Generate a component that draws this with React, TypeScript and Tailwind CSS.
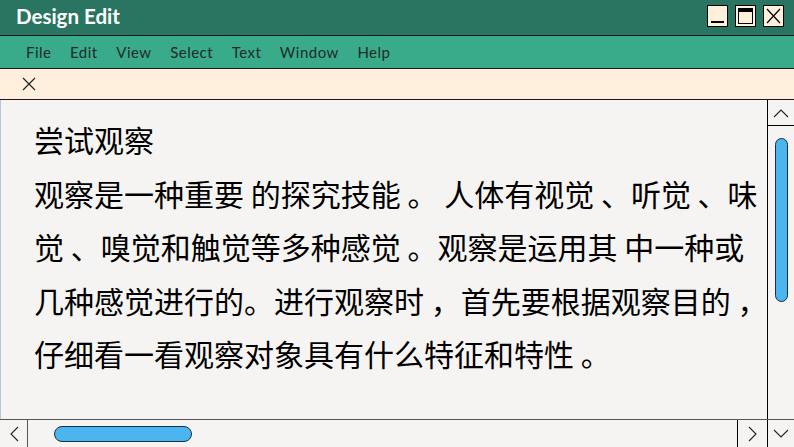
import React from "react";

const lines = [
  "尝试观察",
  "观察是一种重要 的探究技能 。 人体有视觉 、听觉 、味",
  "觉 、嗅觉和触觉等多种感觉 。观察是运用其 中一种或",
  "几种感觉进行的。进行观察时 ，首先要根据观察目的 ，",
  "仔细看一看观察对象具有什么特征和特性 。",
];

const menus = ["File", "Edit", "View", "Select", "Text", "Window", "Help"];

const App: React.FC = () => {
  return (
    <div className="w-[794px] h-[447px] flex flex-col overflow-hidden bg-[#f6f4f2]">
      {/* title bar */}
      <div className="h-[36px] shrink-0 flex items-center justify-between bg-[#2a7561] border-b border-[#1a1a1a] pl-4 pr-[10px]">
        <span className="text-white font-bold text-[20.5px] font-['Lato',sans-serif] leading-none -mt-[2px]">
          Design Edit
        </span>
        <div className="flex gap-[7px] -mt-[4px]">
          <div className="w-[21px] h-[22px] bg-[#fff0dc] border border-black flex items-end justify-center pb-[3px]">
            <div className="w-[13px] h-[2px] bg-black" />
          </div>
          <div className="w-[21px] h-[22px] bg-[#fff0dc] border border-black flex items-center justify-center">
            <div className="w-[15px] h-[16px] border border-black border-t-[4px]" />
          </div>
          <div className="w-[21px] h-[22px] bg-[#fff0dc] border border-black flex items-center justify-center">
            <svg width="15" height="16" viewBox="0 0 15 16">
              <path d="M1 1L14 15M14 1L1 15" stroke="#000" strokeWidth="1.2" fill="none" />
            </svg>
          </div>
        </div>
      </div>

      {/* menu bar */}
      <div className="h-[33px] shrink-0 flex items-center bg-[#39ab8b] border-b border-[#1a1a1a] pl-[26px] gap-[18.5px] font-['Lato',sans-serif] text-[15px] text-[#1e2b26]">
        {menus.map((m) => (
          <span key={m} className="tracking-[0.5px]">{m}</span>
        ))}
      </div>

      {/* tab strip */}
      <div className="h-[31px] shrink-0 flex items-center bg-[#ffefdc] border-b border-[#1a1a1a] pl-[22px]">
        <svg width="14" height="14" viewBox="0 0 14 14">
          <path d="M1 1L13 13M13 1L1 13" stroke="#222" strokeWidth="1.2" fill="none" />
        </svg>
      </div>

      {/* content + vertical scrollbar */}
      <div className="flex-1 flex min-h-0 border-b border-[#555]">
        <div className="flex-1 pl-[33px] pt-[13px] font-['Noto_Sans_CJK_SC',sans-serif] text-[30px] leading-[53.5px] text-black border-l border-[#b8c4dc]">
          {lines.map((l, i) => (
            <div key={i} className="whitespace-pre">{l}</div>
          ))}
        </div>
        <div className="w-[27px] shrink-0 border-l border-black flex flex-col">
          <div className="h-[26px] shrink-0 border-b border-black flex items-center justify-center">
            <svg width="16" height="10" viewBox="0 0 16 10">
              <path d="M1 9L8 2L15 9" stroke="#222" strokeWidth="1.1" fill="none" />
            </svg>
          </div>
          <div className="flex-1 pt-[12px] flex justify-center">
            <div className="w-[13px] h-[164px] rounded-full bg-[#4ab5ef] border border-[#1a3040]" />
          </div>
        </div>
      </div>

      {/* horizontal scrollbar row */}
      <div className="h-[27px] shrink-0 flex">
        <div className="w-[28px] shrink-0 border-r border-[#555] flex items-center justify-center">
          <svg width="10" height="16" viewBox="0 0 10 16">
            <path d="M9 1L2 8L9 15" stroke="#222" strokeWidth="1.1" fill="none" />
          </svg>
        </div>
        <div className="flex-1 flex items-center pl-[26px]">
          <div className="w-[138px] h-[16px] rounded-full bg-[#4ab5ef] border border-[#1a3040]" />
        </div>
        <div className="w-[30px] shrink-0 border-l border-black flex items-center justify-center">
          <svg width="10" height="16" viewBox="0 0 10 16">
            <path d="M1 1L8 8L1 15" stroke="#222" strokeWidth="1.1" fill="none" />
          </svg>
        </div>
        <div className="w-[27px] shrink-0 border-l border-black flex items-center justify-center">
          <svg width="16" height="10" viewBox="0 0 16 10">
            <path d="M1 1L8 8L15 1" stroke="#222" strokeWidth="1.1" fill="none" />
          </svg>
        </div>
      </div>
    </div>
  );
};

export default App;
